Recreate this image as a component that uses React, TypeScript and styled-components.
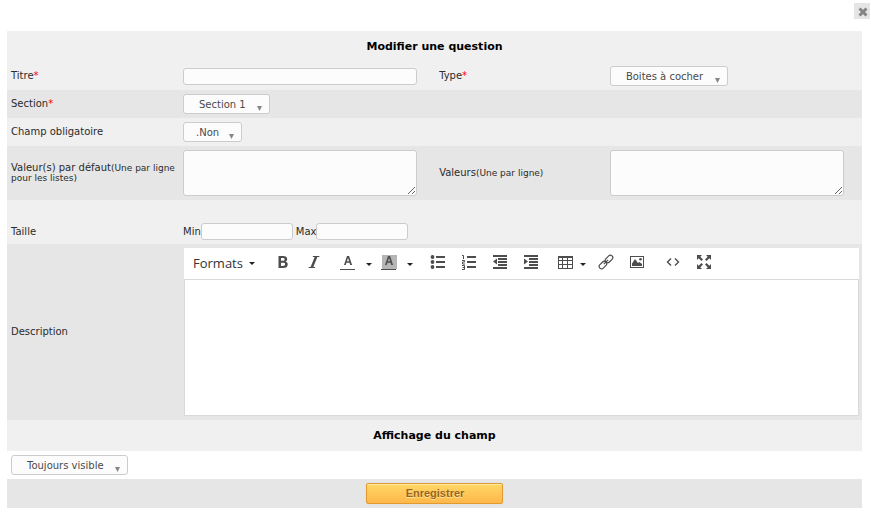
import React from "react";
import styled, { createGlobalStyle, css } from "styled-components";

const GlobalStyle = createGlobalStyle`
  *, *::before, *::after { box-sizing: border-box; }
  body {
    margin: 0;
    background: #fff;
    color: #2b2b2b;
    font-family: "DejaVu Sans", Verdana, sans-serif;
    font-size: 10px;
  }
  button, input, select, textarea { font: inherit; color: inherit; margin: 0; }
`;

const TopBar = styled.header`
  display: flex;
  justify-content: flex-end;
  padding: 3px 1px 12px;
`;

const CloseButton = styled.button`
  display: grid;
  place-items: center;
  width: 16px;
  height: 16px;
  padding: 2px 0 0 2px;
  border: 0;
  background: #e5e5e5;
  color: #858585;
`;

const Form = styled.form`
  margin: 0 9px 10px 7px;
`;

const SectionTitle = styled.h2`
  margin: 0;
  padding: 8px 4px;
  background: #f0f0f0;
  color: #000;
  font-size: 11px;
  line-height: 15px;
  text-align: center;
`;

type Tone = "light" | "dark" | "plain";
const tones: Record<Tone, string> = { light: "#f0f0f0", dark: "#e6e6e6", plain: "#fff" };

const Row = styled.div<{ $tone: Tone; $wide?: boolean }>`
  display: grid;
  grid-template-columns: ${(p) => (p.$wide ? "172px 1fr" : "172px 3fr 2fr 3fr")};
  align-items: center;
  background: ${(p) => tones[p.$tone]};
`;

const SizeRow = styled(Row)`
  padding-top: 19px;
`;

const Footer = styled.div<{ $tone: Tone; $center?: boolean }>`
  display: flex;
  justify-content: ${(p) => (p.$center ? "center" : "flex-start")};
  padding: 4px;
  background: ${(p) => tones[p.$tone]};
`;

const Cell = styled.div`
  display: flex;
  align-items: center;
  min-width: 0;
  padding: 4px;
`;

const Label = styled.label`
  display: block;
  padding: 0 4px;
  line-height: 12px;
`;

const Required = styled.span`
  color: #f00;
`;

const Hint = styled.small`
  font-size: 9px;
  line-height: 9px;
`;

const HintLabel = styled(Label)`
  line-height: 10px;
`;

const field = css`
  border: 1px solid #ccc;
  border-radius: 3px;
  background: #fcfcfc;
`;

const TextInput = styled.input<{ $short?: boolean }>`
  ${field}
  width: ${(p) => (p.$short ? "92px" : "234px")};
  height: 17px;
  padding: 0 4px;
`;

const TextArea = styled.textarea`
  ${field}
  display: block;
  width: 234px;
  height: 46px;
  padding: 2px 4px;
  resize: both;
`;

const Inline = styled.label`
  display: flex;
  align-items: center;
  margin-right: 3px;
`;

const SelectBox = styled.span`
  position: relative;
  display: inline-flex;
`;

const Select = styled.select<{ $width: number; $indent: number }>`
  ${field}
  appearance: none;
  width: ${(p) => p.$width}px;
  height: 20px;
  padding: 1px 0 0 ${(p) => p.$indent}px;
  color: #4a4a4a;
`;

const SelectArrow = styled.svg`
  position: absolute;
  right: 8px;
  bottom: 3px;
  pointer-events: none;
`;

const SubmitButton = styled.button`
  width: 137px;
  height: 21px;
  padding: 0 0 1px 1px;
  border: 1px solid #e09a30;
  border-radius: 2px;
  background: linear-gradient(#ffd766, #ffb74a);
  box-shadow: inset 0 1px 0 #ffe8a0, 0 0 1px #c9c9c9;
  color: #9a651a;
  font-family: "Liberation Sans", Arial, sans-serif;
  font-size: 11px;
  font-weight: bold;
  text-shadow: 0 1px 0 #ffe8a0;
`;

const Editor = styled.div`
  flex: 1;
  min-width: 0;
  margin: 0 -1px 0 1px;
`;

const Toolbar = styled.div`
  display: flex;
  align-items: center;
  height: 31px;
  padding-bottom: 3px;
  background: #fff;
  color: #4d4d4d;
`;

const ToolGroup = styled.div<{ $gap: number; $tight?: boolean }>`
  display: flex;
  gap: ${(p) => (p.$tight ? 0 : 1)}px;
  margin-left: ${(p) => p.$gap}px;
`;

const Split = styled.div`
  display: flex;
`;

const ToolButton = styled.button<{ $narrow?: boolean }>`
  display: grid;
  place-items: center;
  width: ${(p) => (p.$narrow ? 23 : 30)}px;
  height: 28px;
  padding: 0;
  border: 0;
  background: none;
`;

const ArrowButton = styled(ToolButton)`
  width: 11px;
  padding-top: 4px;
`;

const FormatsButton = styled.button`
  display: flex;
  align-items: center;
  gap: 6px;
  width: 72px;
  height: 28px;
  padding: 2px 0 0 9px;
  border: 0;
  background: none;
  color: #333;
  font-family: "Open Sans", sans-serif;
  font-size: 13px;
`;

const EditArea = styled.textarea`
  display: block;
  width: 100%;
  height: 137px;
  padding: 8px;
  border: 1px solid #d9d9d9;
  background: #fff;
  resize: none;
`;

const Caret = () => (
  <svg width="6" height="3" viewBox="0 0 6 3" aria-hidden="true">
    <path d="M0 0h6L3 3z" fill="#222" />
  </svg>
);

const Glyph = ({ children }: { children: React.ReactNode }) => (
  <svg width="16" height="16" viewBox="0 0 16 16" fill="#4d4d4d" aria-hidden="true">
    {children}
  </svg>
);

const icons = {
  bold: <path fillRule="evenodd" d="M3.5 2H8c2.700 0 4.200 1 4.200 3 0 1.400-.8 2.200-1.800 2.600 1.500.4 2.300 1.300 2.300 2.800 0 2.300-1.700 3.600-4.500 3.600H3.500zM6 4v2.800h1.700c1.200 0 1.900-.4 1.900-1.400S8.900 4 7.700 4zm0 4.700V12h2c1.400 0 2.100-.5 2.100-1.700S9.400 8.700 8 8.700z" />,
  italic: <path d="M7 2h6.500l-.3 1.100h-1.800L7.300 12.900h1.900L8.900 14H2.500l.3-1.100h1.800L8.700 3.100H6.700z" />,
  forecolor: <path d="M7 2h2.100l3 9h-1.900l-.7-2.200H6.400L5.700 11H4zm1 2L6.900 7.300h2.200zM0 15h15v1H0z" />,
  backcolor: (
    <>
      <path fill="#b5b5b5" d="M1 1h15v14H1z" />
      <path d="M7 2h2.100l3 9h-1.900l-.7-2.200H6.400L5.700 11H4zm1 2L6.900 7.300h2.200zM0 15h15v1H0z" />
    </>
  ),
  bullets: (
    <>
      <path d="M6 2h9v2H6zM6 7h9v2H6zM6 12h9v2H6z" />
      <circle cx="2.500" cy="3" r="1.900" />
      <circle cx="2.500" cy="8" r="1.900" />
      <circle cx="2.500" cy="13" r="1.900" />
    </>
  ),
  numbers: (
    <>
      <path d="M6 2h9v2H6zM6 7h9v2H6zM6 12h9v2H6z" />
      <path d="M1 1.500h1.500V5M1 6.500h2.500v1.500H1.500v2h2.500M1 11.500h2.500v4H1M1.500 13.500h2" fill="none" stroke="#4d4d4d" />
    </>
  ),
  outdent: <path d="M1 1h14v2H1zM6 4h9v2H6zM6 7h9v2H6zM6 10h9v2H6zM1 13h14v2H1zM5 4.500v6L1 7.500z" />,
  indent: <path d="M1 1h14v2H1zM6 4h9v2H6zM6 7h9v2H6zM6 10h9v2H6zM1 13h14v2H1zM1 4.500v6l4-3z" />,
  table: <path fillRule="evenodd" d="M0 2h15v13H0zM1 4v2h3V4zm4 0v2h4V4zm5 0v2h4V4zM1 7v3h3V7zm4 0v3h4V7zm5 0v3h4V7zM1 11v3h3v-3zm4 0v3h4v-3zm5 0v3h4v-3z" />,
  link: (
    <g fill="none" stroke="#4d4d4d" strokeWidth="1.200" transform="rotate(-45 8 8)">
      <rect x="-.6" y="5.600" width="8.600" height="4.800" rx="2.400" />
      <rect x="8" y="5.600" width="8.600" height="4.800" rx="2.400" />
      <path d="M5 8h6" />
    </g>
  ),
  image: (
    <>
      <path fillRule="evenodd" d="M1 2h14v12H1zm1 1v10h12V3z" />
      <path d="M3 12V9.500L6 5l3 4 1.500-1L13 10v2z" />
      <circle cx="11.500" cy="5.200" r="1.300" />
    </>
  ),
  code: <path d="M6 4.500L2.500 8 6 11.500M10 4.500l3.500 3.500-3.500 3.500" fill="none" stroke="#4d4d4d" strokeWidth="1.400" />,
  fullscreen: (
    <path d="M1 1h5L4.300 2.700 7 5.400 5.400 7 2.700 4.300 1 6zM15 1v5l-1.700-1.700L10.600 7 9 5.400l2.700-2.700L10 1zM1 15v-5l1.700 1.700L5.400 9 7 10.600l-2.700 2.700L6 15zM15 15h-5l1.700-1.700L9 10.600 10.600 9l2.700 2.700L15 10z" />
  ),
};

function Tool({ icon, name, narrow }: { icon: keyof typeof icons; name: string; narrow?: boolean }) {
  return (
    <ToolButton type="button" aria-label={name} $narrow={narrow}>
      <Glyph>{icons[icon]}</Glyph>
    </ToolButton>
  );
}

function SplitTool({ icon, name, narrow }: { icon: keyof typeof icons; name: string; narrow?: boolean }) {
  return (
    <Split>
      <Tool icon={icon} name={name} narrow={narrow} />
      <ArrowButton type="button" aria-label={`${name} : options`}>
        <Caret />
      </ArrowButton>
    </Split>
  );
}

function DropDown({ id, value, width, indent = 15, label }: { id: string; value: string; width: number; indent?: number; label?: string }) {
  return (
    <SelectBox>
      <Select id={id} $width={width} $indent={indent} aria-label={label}>
        <option>{value}</option>
      </Select>
      <SelectArrow width="5" height="5" viewBox="0 0 5 5" aria-hidden="true">
        <path d="M0 0h5L2.500 5z" fill="#858585" />
      </SelectArrow>
    </SelectBox>
  );
}

export default function App() {
  return (
    <>
      <GlobalStyle />
      <TopBar>
        <CloseButton type="button" aria-label="Fermer">
          <svg width="10" height="10" viewBox="0 0 10 10" aria-hidden="true">
            <path d="M1.500 1.500l7 7M8.500 1.500l-7 7" stroke="currentColor" strokeWidth="3" />
          </svg>
        </CloseButton>
      </TopBar>
      <Form onSubmit={(e) => e.preventDefault()}>
        <SectionTitle>Modifier une question</SectionTitle>
        <Row $tone="light">
          <Label htmlFor="titre">Titre<Required>*</Required></Label>
          <Cell><TextInput id="titre" /></Cell>
          <Label htmlFor="type">Type<Required>*</Required></Label>
          <Cell><DropDown id="type" value="Boites à cocher" width={118} /></Cell>
        </Row>
        <Row $tone="dark">
          <Label htmlFor="section">Section<Required>*</Required></Label>
          <Cell><DropDown id="section" value="Section 1" width={87} /></Cell>
        </Row>
        <Row $tone="light">
          <Label htmlFor="obligatoire">Champ obligatoire</Label>
          <Cell><DropDown id="obligatoire" value=".Non" width={59} indent={12} /></Cell>
        </Row>
        <Row $tone="dark">
          <HintLabel htmlFor="defaut">Valeur(s) par défaut<Hint>(Une par ligne pour les listes)</Hint></HintLabel>
          <Cell><TextArea id="defaut" /></Cell>
          <HintLabel htmlFor="valeurs">Valeurs<Hint>(Une par ligne)</Hint></HintLabel>
          <Cell><TextArea id="valeurs" /></Cell>
        </Row>
        <SizeRow $tone="light" $wide>
          <Label as="span">Taille</Label>
          <Cell>
            <Inline>Min<TextInput $short /></Inline>
            <Inline>Max<TextInput $short /></Inline>
          </Cell>
        </SizeRow>
        <Row $tone="dark" $wide>
          <Label htmlFor="description">Description</Label>
          <Cell>
            <Editor>
              <Toolbar role="toolbar" aria-label="Mise en forme">
                <FormatsButton type="button">Formats<Caret /></FormatsButton>
                <ToolGroup $gap={12}>
                  <Tool icon="bold" name="Gras" />
                  <Tool icon="italic" name="Italique" />
                </ToolGroup>
                <ToolGroup $gap={4} $tight>
                  <SplitTool icon="forecolor" name="Couleur du texte" />
                  <SplitTool icon="backcolor" name="Couleur de fond" />
                </ToolGroup>
                <ToolGroup $gap={8}>
                  <Tool icon="bullets" name="Liste à puces" />
                  <Tool icon="numbers" name="Liste numérotée" />
                  <Tool icon="outdent" name="Diminuer le retrait" />
                  <Tool icon="indent" name="Augmenter le retrait" />
                </ToolGroup>
                <ToolGroup $gap={8}>
                  <SplitTool icon="table" name="Tableau" narrow />
                </ToolGroup>
                <ToolGroup $gap={3}>
                  <Tool icon="link" name="Lien" />
                  <Tool icon="image" name="Image" />
                </ToolGroup>
                <ToolGroup $gap={6}>
                  <Tool icon="code" name="Code source" />
                  <Tool icon="fullscreen" name="Plein écran" />
                </ToolGroup>
              </Toolbar>
              <EditArea id="description" />
            </Editor>
          </Cell>
        </Row>
        <SectionTitle>Affichage du champ</SectionTitle>
        <Footer $tone="plain">
          <DropDown id="affichage" value="Toujours visible" width={117} label="Affichage du champ" />
        </Footer>
        <Footer $tone="dark" $center>
          <SubmitButton type="submit">Enregistrer</SubmitButton>
        </Footer>
      </Form>
    </>
  );
}
